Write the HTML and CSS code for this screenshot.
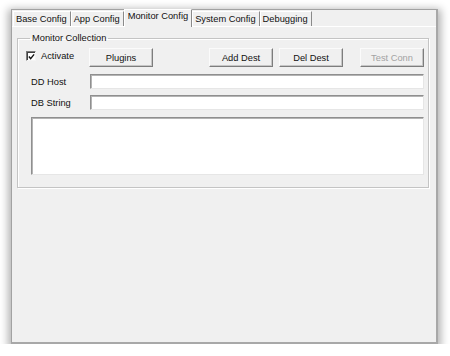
FILE: index.html
```html
<!DOCTYPE html>
<html lang="en">
<head>
    <meta charset="UTF-8">
    <meta name="viewport" content="width=device-width, initial-scale=1.0">
    <title>Monitor Config</title>
    <link rel="stylesheet" href="styles.css">
</head>
<body>
    <div class="window">
        <div class="tabs">
            <div class="tab">Base Config</div>
            <div class="tab">App Config</div>
            <div class="tab active">Monitor Config</div>
            <div class="tab">System Config</div>
            <div class="tab">Debugging</div>
        </div>
        <div class="panel">
            <fieldset class="group">
                <legend>Monitor Collection</legend>
                <div class="row top-row">
                    <label class="check">
                        <span class="box">
                            <svg width="8" height="8" viewBox="0 0 8 8"><path d="M1 3.5 L3 5.8 L7 1" fill="none" stroke="#111" stroke-width="1.6"/></svg>
                        </span>
                        Activate
                    </label>
                    <button class="btn">Plugins</button>
                    <span class="spacer"></span>
                    <button class="btn">Add Dest</button>
                    <button class="btn del">Del Dest</button>
                    <button class="btn test" disabled>Test Conn</button>
                </div>
                <div class="row field">
                    <span class="lbl">DD Host</span>
                    <div class="input"></div>
                </div>
                <div class="row field">
                    <span class="lbl">DB String</span>
                    <div class="input"></div>
                </div>
                <div class="memo"></div>
            </fieldset>
        </div>
    </div>
</body>
</html>
```

FILE: styles.css
```css
body {
    margin: 0;
    padding: 9px 0 0 11px;
    background-color: #ffffff;
    font-family: "Liberation Sans", Arial, sans-serif;
    font-size: 9.3px;
    color: #111;
}
.window {
    box-sizing: border-box;
    width: 427px;
    height: 335px;
    background: #f0f0f0;
    border: 1px solid #a2a2a2;
    border-right: 2px solid #a8a8a8;
    border-bottom: 2px solid #a8a8a8;
    box-shadow: 0 3px 8px 3px rgba(0, 0, 0, 0.3);
    display: flex;
    flex-direction: column;
}
.tabs {
    display: flex;
    align-items: flex-end;
    height: 16px;
    padding-left: 1px;
}
.tab {
    box-sizing: border-box;
    height: 15px;
    line-height: 14px;
    padding: 0 3px 0 2px;
    border-left: 1px solid #fff;
    border-top: 1px solid #fff;
    border-right: 1px solid #8a8a8a;
    white-space: nowrap;
}
.tab.active {
    height: 18px;
    line-height: 13px;
    margin-bottom: -1px;
    padding: 0 3px;
    background: #f0f0f0;
    position: relative;
    z-index: 1;
}
.panel {
    flex: 1;
    border-top: 1px solid #fff;
    padding: 6px 7px 0 5px;
}
.group {
    margin: 0;
    padding: 4px 4px 12px 8px;
    border: 1px solid #c4c4c4;
    box-shadow: 1px 1px 0 #fff, inset 1px 1px 0 #fff;
    display: flex;
    flex-direction: column;
    gap: 6px;
}
.group legend {
    padding: 0 2px;
    margin-left: 4px;
    line-height: 11px;
}
.row {
    display: flex;
    align-items: center;
}
.top-row {
    height: 19px;
    margin-bottom: 1px;
}
.check {
    width: 63px;
    display: flex;
    align-items: center;
    gap: 5px;
    margin-top: -3px;
}
.box {
    box-sizing: border-box;
    width: 10px;
    height: 10px;
    background: #fff;
    border: 1px solid;
    border-color: #7a7a7a #f4f4f4 #f4f4f4 #7a7a7a;
    box-shadow: inset 1px 1px 0 #404040;
    display: flex;
    align-items: center;
    justify-content: center;
}
.box svg {
    margin: 1px 0 0 1px;
}
.btn {
    box-sizing: border-box;
    width: 64px;
    height: 19px;
    padding: 0;
    font-family: inherit;
    font-size: inherit;
    color: #111;
    background: #f0f0f0;
    border: 1px solid;
    border-color: #fbfbfb #7d7d7d #7d7d7d #fbfbfb;
    box-shadow: inset -1px -1px 0 #c6c6c6;
}
.spacer {
    flex: 1;
}
.del {
    margin-left: 6px;
    margin-right: 17px;
}
.test {
    color: #a3a3a3;
}
.field {
    height: 15px;
}
.lbl {
    width: 64px;
    padding-left: 5px;
    box-sizing: border-box;
}
.input,
.memo {
    box-sizing: border-box;
    background: #fff;
    border: 1px solid;
    border-color: #8f8f8f #e6e6e6 #e6e6e6 #8f8f8f;
    box-shadow: inset 1px 1px 0 #b4b4b4;
}
.input {
    flex: 1;
    height: 15px;
}
.memo {
    margin: 1px 0 0 5px;
    height: 58px;
}
```
